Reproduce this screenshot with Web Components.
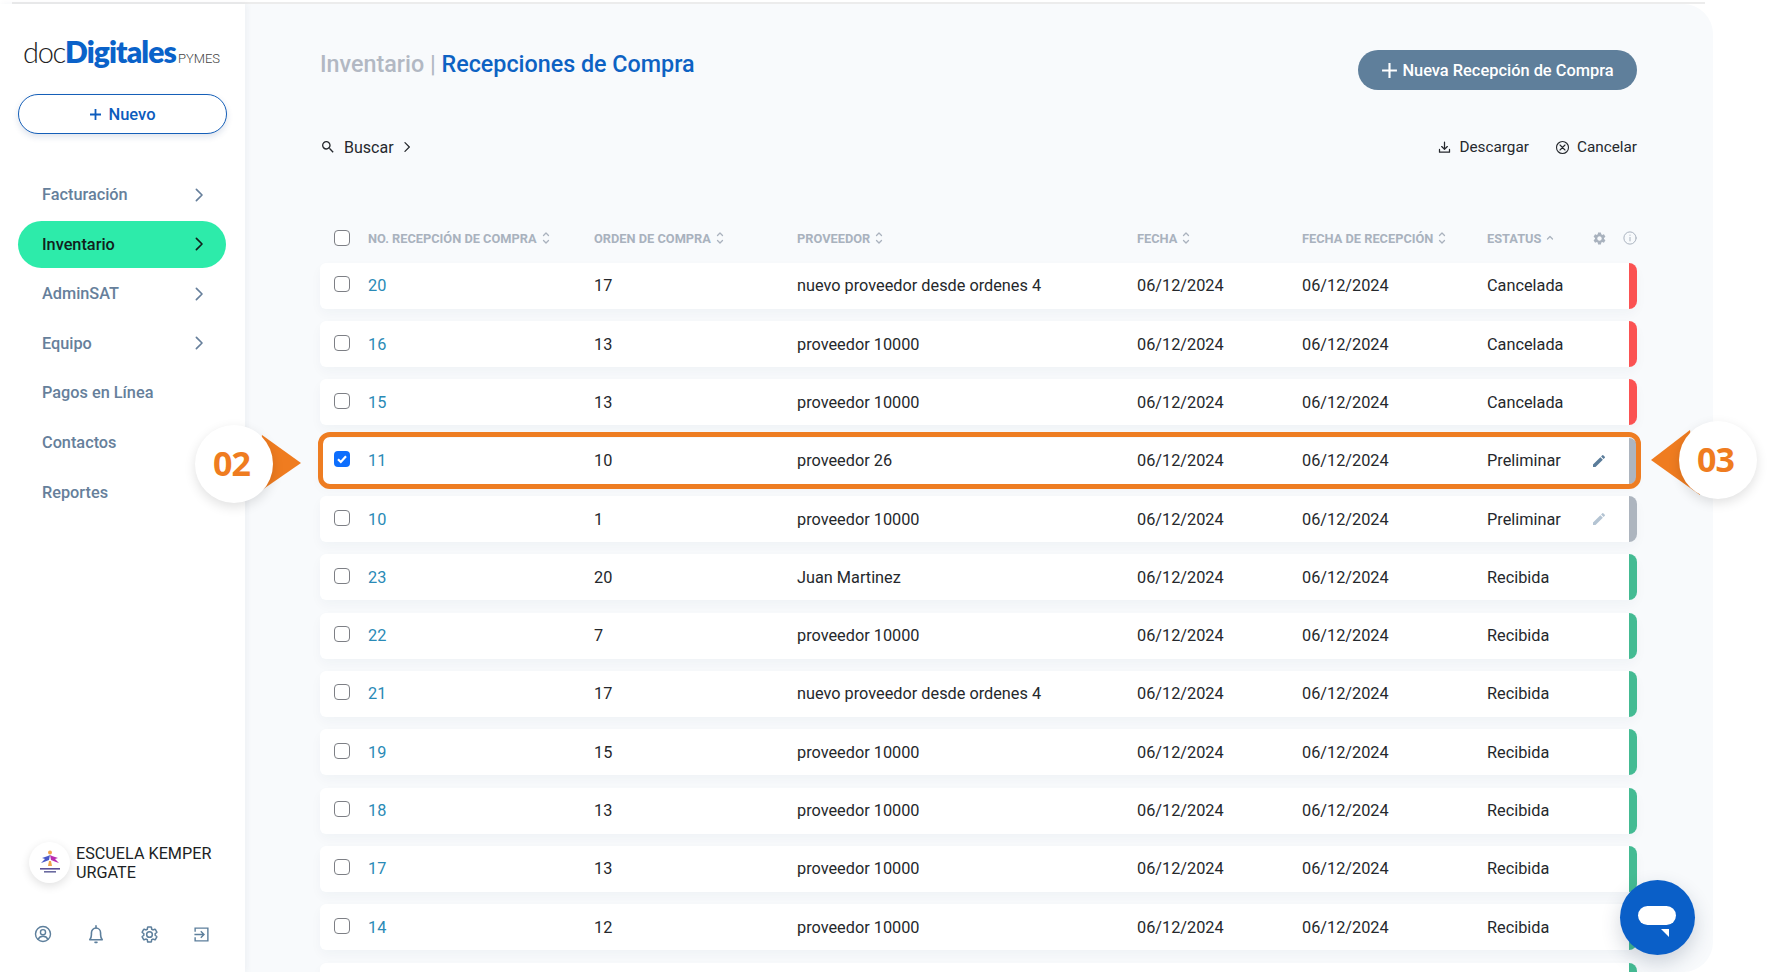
<!DOCTYPE html>
<html lang="es">
<head>
<meta charset="utf-8">
<title>Recepciones de Compra</title>
<style>
html,body{margin:0;padding:0;height:972px;overflow:hidden;background:#fff;font-family:Roboto,"Liberation Sans",sans-serif;}
</style>
</head>
<body>
<app-shell>
  <side-bar slot="side">
    <doc-logo></doc-logo>
    <new-button>Nuevo</new-button>
    <nav-item arrow>Facturación</nav-item>
    <nav-item arrow active>Inventario</nav-item>
    <nav-item arrow>AdminSAT</nav-item>
    <nav-item arrow>Equipo</nav-item>
    <nav-item>Pagos en Línea</nav-item>
    <nav-item>Contactos</nav-item>
    <nav-item>Reportes</nav-item>
  </side-bar>
  <page-main slot="main">
    <page-head></page-head>
    <tool-bar></tool-bar>
    <table-head></table-head>
    <data-row tone="red" no="20" oc="17" prov="nuevo proveedor desde ordenes 4" est="Cancelada"></data-row>
    <data-row tone="red" no="16" oc="13" prov="proveedor 10000" est="Cancelada"></data-row>
    <data-row tone="red" no="15" oc="13" prov="proveedor 10000" est="Cancelada"></data-row>
    <data-row tone="grey" no="11" oc="10" prov="proveedor 26" est="Preliminar" edit="dark" checked highlight></data-row>
    <data-row tone="grey" no="10" oc="1" prov="proveedor 10000" est="Preliminar" edit="light"></data-row>
    <data-row tone="green" no="23" oc="20" prov="Juan Martinez" est="Recibida"></data-row>
    <data-row tone="green" no="22" oc="7" prov="proveedor 10000" est="Recibida"></data-row>
    <data-row tone="green" no="21" oc="17" prov="nuevo proveedor desde ordenes 4" est="Recibida"></data-row>
    <data-row tone="green" no="19" oc="15" prov="proveedor 10000" est="Recibida"></data-row>
    <data-row tone="green" no="18" oc="13" prov="proveedor 10000" est="Recibida"></data-row>
    <data-row tone="green" no="17" oc="13" prov="proveedor 10000" est="Recibida"></data-row>
    <data-row tone="green" no="14" oc="12" prov="proveedor 10000" est="Recibida"></data-row>
    <data-row tone="green" blank></data-row>
  </page-main>
  <call-out slot="over" side="left" style="left:195px;top:422px">02</call-out>
  <call-out slot="over" side="right" style="left:1646px;top:418px">03</call-out>
  <chat-fab slot="over"></chat-fab>
</app-shell>

<script>
const P = {
  search:'<path fill="currentColor" d="M15.5 14h-.79l-.28-.27A6.471 6.471 0 0 0 16 9.5 6.5 6.5 0 1 0 9.5 16c1.61 0 3.09-.59 4.23-1.57l.27.28v.79l5 4.99L20.49 19l-4.99-5zm-6 0C7.01 14 5 11.99 5 9.5S7.01 5 9.5 5 14 7.01 14 9.5 11.99 14 9.5 14z"/>',
  chev:'<path fill="none" stroke="currentColor" stroke-width="2.200" stroke-linecap="round" stroke-linejoin="round" d="M8.500 4.500l7.500 7.500-7.500 7.500"/>',
  download:'<path fill="none" stroke="currentColor" stroke-width="2" stroke-linecap="round" stroke-linejoin="round" d="M12 3.500v11M7.500 10.500l4.500 4.500 4.500-4.500M4 15v4.500h16V15"/>',
  cancel:'<g fill="none" stroke="currentColor" stroke-width="1.800" stroke-linecap="round"><circle cx="12" cy="12" r="9.600"/><path d="M8 8l8 8M16 8l-8 8"/></g>',
  edit:'<path fill="currentColor" d="M3 17.25V21h3.75L17.81 9.94l-3.75-3.75L3 17.25zM20.71 7.04a.996.996 0 0 0 0-1.41l-2.34-2.34a.996.996 0 0 0-1.41 0l-1.83 1.83 3.75 3.75 1.83-1.83z"/>',
  gearD:'M19.14 12.94c.04-.3.06-.61.06-.94 0-.32-.02-.64-.07-.94l2.03-1.58a.49.49 0 0 0 .12-.61l-1.92-3.32a.488.488 0 0 0-.59-.22l-2.39.96c-.5-.38-1.03-.7-1.62-.94l-.36-2.54a.484.484 0 0 0-.48-.41h-3.84c-.24 0-.43.17-.47.41l-.36 2.54c-.59.24-1.13.57-1.62.94l-2.39-.96c-.22-.08-.47 0-.59.22L2.74 8.87c-.12.21-.08.47.12.61l2.03 1.58c-.05.3-.09.63-.09.94s.02.64.07.94l-2.03 1.58a.49.49 0 0 0-.12.61l1.92 3.32c.12.22.37.29.59.22l2.39-.96c.5.38 1.03.7 1.62.94l.36 2.54c.05.24.24.41.48.41h3.84c.24 0 .44-.17.47-.41l.36-2.54c.59-.24 1.13-.56 1.62-.94l2.39.96c.22.08.47 0 .59-.22l1.92-3.32c.12-.22.07-.47-.12-.61l-2.01-1.58zM12 15.6c-1.98 0-3.6-1.62-3.6-3.6s1.62-3.6 3.6-3.6 3.6 1.62 3.6 3.6-1.62 3.6-3.6 3.6z',
  user:'<g fill="none" stroke="currentColor" stroke-width="1.900" stroke-linecap="round"><circle cx="12" cy="12" r="10"/><circle cx="12" cy="9.600" r="3.400"/><path d="M5.600 19c1.200-2.800 3.600-4 6.400-4s5.200 1.200 6.400 4"/></g>',
  bell:'<g fill="none" stroke="currentColor" stroke-width="1.900" stroke-linecap="round" stroke-linejoin="round"><path d="M4.500 18.800c1.400-1.600 2-3.200 2-5.800v-2.200C6.500 7.400 8.900 4.800 12 4.800s5.500 2.600 5.500 6V13c0 2.600.6 4.200 2 5.800z"/><path d="M12 2v2.800M10.800 22h2.400"/></g>',
  exit:'<g fill="none" stroke="currentColor" stroke-width="2" stroke-linecap="butt"><path d="M3 8V3h18v18H3v-5"/><path d="M2 12h13M11 7.500l4.500 4.500-4.500 4.500"/></g>'
};
const svg=(k,s,extra='')=>`<svg width="${s}" height="${s}" viewBox="0 0 24 24" style="display:block;flex:none;${extra}">${P[k]}</svg>`;
function def(name, html){
  customElements.define(name, class extends HTMLElement{
    constructor(){super();this.attachShadow({mode:'open'});}
    connectedCallback(){
      this.shadowRoot.innerHTML = typeof html==='function'?html(this):html;
    }
  });
}

def('app-shell',`<style>
:host{display:block;position:relative;width:1767px;height:972px;overflow:hidden;background:#fff}
.line{height:2px;margin:2px 62px 0 12px;background:#ececec}
.cols{display:flex;height:968px;align-items:stretch}
</style>
<div class="line"></div>
<div class="cols"><slot name="side"></slot><slot name="main"></slot></div>
<slot name="over"></slot>`);

def('side-bar',()=>`<style>
:host{display:flex;flex-direction:column;box-sizing:border-box;width:245px;flex:none;height:968px;padding:0 18px 0 18px;background:#fff;box-shadow:2px 0 6px rgba(40,60,90,.05);position:relative;z-index:1}
.grow{flex:1}
.co{display:flex;align-items:center;gap:6px;margin:0 0 0 11px;font-size:16.200px;line-height:19px;color:#1c1f24}
.av{width:41px;height:41px;border-radius:50%;background:#fff;box-shadow:0 3px 10px rgba(0,0,0,.12);display:grid;place-items:center;flex:none}
.ic{display:flex;justify-content:space-between;align-items:center;color:#5d7f9c;margin:41px 8px 0 16px;padding-bottom:28px;width:176px}
</style>
<slot></slot>
<div class="grow"></div>
<div class="co"><div class="av"><svg width="28" height="28" viewBox="0 0 28 28">
<circle cx="14" cy="3.500" r="2" fill="#f0a24a"/><path d="M14 6l-1 5-5 2-3 1 4-4-3-1 6-2z" fill="#4a58c8"/><path d="M14 6l1 5 5 2 3 1-4-4 3-1-6-2z" fill="#b82cb0"/><path d="M13 12h2l1 5h-4z" fill="#f0a24a"/>
<rect x="4" y="19" width="20" height="1.600" fill="#5a4f98"/><rect x="8" y="22" width="12" height="1.600" fill="#6a6aa0"/></svg></div>
<div>ESCUELA KEMPER<br>URGATE</div></div>
<div class="ic">${svg('user',18)}${svg('bell',20)}<svg width="19" height="19" viewBox="0 0 24 24" style="display:block"><path d="${P.gearD}" fill="none" stroke="currentColor" stroke-width="1.900"/></svg>${svg('exit',17)}</div>`);

def('doc-logo',`<style>
:host{display:block;height:41px;margin:29px 0 0 5px;white-space:nowrap;line-height:41px}
.d{font:300 29px Lato,sans-serif;color:#222;letter-spacing:-1.300px}
.g{font:800 30px Lato,sans-serif;color:#0a62c9;letter-spacing:-.9px}
.p{font:300 13px Roboto,sans-serif;color:#444;margin-left:2px}
</style><span class="d">doc</span><span class="g">Digitales</span><span class="p">PYMES</span>`);

def('new-button',()=>`<style>
:host{display:flex;align-items:center;justify-content:center;gap:6px;box-sizing:border-box;width:209px;height:40px;margin-top:20px;margin-bottom:37px;border:1.500px solid #155fb8;border-radius:20px;color:#0d5cbd;font:500 16.500px Roboto,sans-serif;background:#fff;box-shadow:0 3px 6px rgba(20,60,120,.14)}
</style><svg width="13" height="13" viewBox="0 0 13 13"><path d="M6.500 1v11M1 6.500h11" stroke="currentColor" stroke-width="1.800"/></svg><slot></slot>`);

def('nav-item',(h)=>`<style>
:host{display:flex;align-items:center;justify-content:space-between;box-sizing:border-box;width:208px;height:47px;margin-bottom:2.600px;padding:0 18px 0 24px;border-radius:24px;font:500 16.300px Roboto,sans-serif;color:${h.hasAttribute('active')?'#11211c':'#667f9b'};background:${h.hasAttribute('active')?'#2debaa':'transparent'}}
</style><slot></slot>${h.hasAttribute('arrow')?svg('chev',18):''}`);

def('page-main',`<style>
:host{display:flex;flex-direction:column;box-sizing:border-box;width:1468px;flex:none;height:968px;padding:0 76px 0 75px;background:#f8fafc;border-radius:0 30px 30px 0;overflow:hidden;--cols:48px 226px 203px 340px 165px 185px 101px 22px 19px 8px}
</style><slot></slot>`);

def('page-head',`<style>
:host{display:flex;flex:none;justify-content:space-between;align-items:flex-start;padding-top:46px;height:40px}
h1{margin:-4px 0 0;font:500 23.300px/36px Roboto,sans-serif;color:#0d62c3;white-space:nowrap}
h1 span{color:#b2b8c3}
button{all:unset;display:flex;align-items:center;justify-content:center;gap:4px;box-sizing:border-box;width:279px;height:40px;border-radius:20px;background:#5f7f9b;color:#fff;font:500 16.400px Roboto,sans-serif}
</style><h1><span>Inventario | </span>Recepciones de Compra</h1>
<button><svg width="17" height="17" viewBox="0 0 16 16"><path d="M8 1v14M1 8h14" stroke="#fff" stroke-width="2"/></svg>Nueva Recepción de Compra</button>`);

def('tool-bar',()=>`<style>
:host{display:flex;flex:none;justify-content:space-between;align-items:center;height:24px;margin-top:45px;color:#26292e;font:400 16px Roboto,sans-serif}
div{display:flex;align-items:center}
.l{gap:8px}
.r{gap:26px;font-size:15.300px}
.r span{display:flex;align-items:center;gap:7px}
</style><div class="l">${svg('search',16)}<span>Buscar</span>${svg('chev',14,'margin-left:-2px')}</div>
<div class="r"><span>${svg('download',15)}Descargar</span><span>${svg('cancel',15)}Cancelar</span></div>`);

const sort=(up=true,down=true)=>`<svg width="8" height="14" viewBox="0 0 8 14" style="flex:none;margin-left:5px"><g fill="none" stroke="#aab2be" stroke-width="1.300" stroke-linecap="round" stroke-linejoin="round">${up&&down?'<path d="M1.500 4.500L4 2l2.500 2.500"/><path d="M1.500 9.500L4 12l2.500-2.500"/>':'<path d="M1.500 8L4 5.500 6.500 8"/>'}</g></svg>`;
def('table-head',()=>`<style>
:host{display:grid;flex:none;grid-template-columns:var(--cols);align-items:center;height:24px;margin-top:67px;margin-bottom:12.700px;color:#a9b2be;font:700 12.800px Roboto,sans-serif;white-space:nowrap}
.c{display:flex;align-items:center}
.cb{width:16px;height:16px;box-sizing:border-box;border:1.500px solid #7d7f85;border-radius:4px;background:#fff;margin-left:14px;margin-bottom:1px}
.g{display:flex;justify-content:center}
.i{grid-column:9 / 11;justify-self:end;display:flex}
</style><span class="cb"></span>
<span class="c">NO. RECEPCIÓN DE COMPRA${sort()}</span><span class="c">ORDEN DE COMPRA${sort()}</span><span class="c">PROVEEDOR${sort()}</span><span class="c">FECHA${sort()}</span><span class="c">FECHA DE RECEPCIÓN${sort()}</span><span class="c">ESTATUS${sort(true,false)}</span>
<span class="g"><svg width="15" height="15" viewBox="0 0 24 24"><path d="${P.gearD}" fill="#a9b2be"/></svg></span>
<span class="i"><svg width="14" height="14" viewBox="0 0 24 24"><g fill="none" stroke="#a9b2be" stroke-width="1.700" stroke-linecap="round"><circle cx="12" cy="12" r="10.500"/><path d="M12 11v6M12 7v.4"/></g></svg></span>`);

def('data-row',(h)=>{
  const a=n=>h.getAttribute(n)||'';
  const tone={red:'#fb5252',grey:'#adb5bf',green:'#44bb93'}[a('tone')];
  const blank=h.hasAttribute('blank');
  const ed=a('edit');
  return `<style>
:host{display:grid;grid-template-columns:var(--cols);align-items:center;flex:none;height:46px;margin-bottom:12.330px;background:#fff;border-radius:6px 9px 9px 6px;box-shadow:0 5px 12px rgba(40,60,90,.035);color:#25282c;font:400 16.300px Roboto,sans-serif;white-space:nowrap;position:relative}
.cb{display:block;margin:0 0 3px 14px;width:16px;height:16px;box-sizing:border-box;border:1.500px solid #7d7f85;border-radius:4px;background:#fff}
.cb.on{border:0;background:#0d6efd}
.no{color:#2a8ab6}
.bar{grid-column:10;grid-row:1;align-self:stretch;background:${tone};border-radius:0 9px 9px 0}
.hl{position:absolute;inset:-5.500px -4px -5px -2px;border:5px solid #ee7d22;border-radius:12px;pointer-events:none}
.edit{grid-column:8;display:flex;justify-content:center;color:${ed==='dark'?'#5a7c9a':'#b4c4d3'}}
</style>
${blank?'':`<span class="cb ${h.hasAttribute('checked')?'on':''}">${h.hasAttribute('checked')?'<svg width="16" height="16" viewBox="0 0 16 16" style="display:block"><path d="M4 8.300l2.800 2.700L12 5.200" fill="none" stroke="#fff" stroke-width="2.200"/></svg>':''}</span>
<span class="no">${a('no')}</span><span>${a('oc')}</span><span>${a('prov')}</span><span>06/12/2024</span><span>06/12/2024</span><span>${a('est')}</span>
${ed?`<span class="edit">${svg('edit',16)}</span>`:''}`}
<span class="bar"></span>
${h.hasAttribute('highlight')?'<span class="hl"></span>':''}`;
});

def('call-out',(h)=>{
  const left=h.getAttribute('side')==='left';
  return `<style>
:host{position:absolute;display:block;width:110px;height:84px;z-index:5;font:700 34px/1 "Open Sans",sans-serif;color:#ef7c20}
svg{position:absolute;inset:0;overflow:visible}
.c{position:absolute;top:3px;${left?'left:0':'left:33px'};box-sizing:border-box;padding:0 5px 3px 0;width:78px;height:78px;border-radius:50%;background:#fff;box-shadow:0 4px 12px rgba(0,0,0,.12);display:grid;place-items:center;letter-spacing:-1px}
</style>
<svg width="110" height="84" viewBox="0 0 110 84">${left?'<path d="M67 13L106 41 57 75z" fill="#ef7c20"/>':'<path d="M44 12L5 42 54 77z" fill="#ef7c20"/>'}</svg>
<div class="c"><slot></slot></div>`;
});

def('chat-fab',`<style>
:host{position:absolute;left:1620px;top:880px;width:75px;height:75px;border-radius:50%;background:#0a5fc8;box-shadow:0 8px 20px rgba(30,50,80,.2);z-index:6;display:block}
svg{display:block}
</style><svg width="75" height="75" viewBox="0 0 75 75"><rect x="18" y="26" width="38" height="19" rx="9.500" fill="#fff"/><path d="M41 49h8v8z" fill="#fff"/></svg>`);
</script>
</body>
</html>
